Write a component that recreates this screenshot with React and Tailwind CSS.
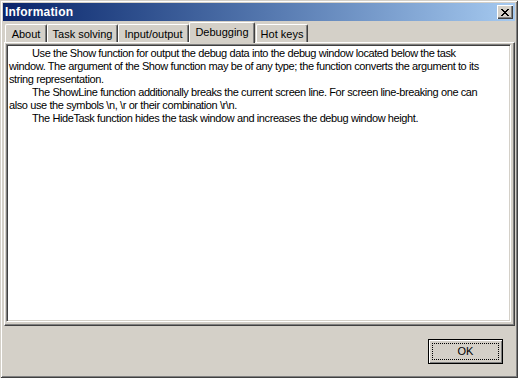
import React from "react";

const font = { fontFamily: '"Liberation Sans", Arial, sans-serif' };

function Tab({ label, w, selected, extra = "" }) {
  if (selected) {
    return (
      <div
        className={`relative z-10 -mb-[1px] h-[21px] ${w} ${extra} flex items-start justify-center pt-[2px] bg-[#d4d0c8] border-l border-t border-white border-r border-r-[#404040] shadow-[inset_-1px_0_0_#808080] rounded-t-[2px] text-[11px] leading-[14px] text-black`}
      >
        {label}
      </div>
    );
  }
  return (
    <div
      className={`h-[18px] ${w} ${extra} flex items-start justify-center pt-[2px] bg-[#d4d0c8] border-l border-t border-white border-r border-r-[#404040] shadow-[inset_-1px_0_0_#808080] rounded-t-[2px] text-[11px] leading-[14px] text-black`}
    >
      {label}
    </div>
  );
}

export default function App() {
  const lines = [
    { t: "Use the Show function for output the debug data into the debug window located below the task", indent: true },
    { t: "window. The argument of the Show function may be of any type; the function converts the argument to its" },
    { t: "string representation." },
    { t: "The ShowLine function additionally breaks the current screen line. For screen line-breaking one can", indent: true },
    { t: "also use the symbols \\n, \\r or their combination \\r\\n." },
    { t: "The HideTask function hides the task window and increases the debug window height.", indent: true },
  ];
  return (
    <div style={font} className="w-[518px] h-[378px] bg-[#d4d0c8] flex flex-col p-[3px] shadow-[inset_1px_1px_0_#d4d0c8,inset_-1px_-1px_0_#404040,inset_2px_2px_0_#ffffff,inset_-2px_-2px_0_#808080] overflow-hidden">
      {/* Title bar */}
      <div className="h-[18px] flex items-center justify-between pl-[2px] pr-[2px] bg-gradient-to-r from-[#0a246a] to-[#a6caf0]">
        <span className="text-white font-bold text-[12px] leading-[14px] tracking-[0.2px]">Information</span>
        <div className="w-[16px] h-[14px] bg-[#d4d0c8] flex items-center justify-center shadow-[inset_1px_1px_0_#ffffff,inset_-1px_-1px_0_#404040,inset_-2px_-2px_0_#808080]">
          <svg width="8" height="7" viewBox="0 0 8 7" shapeRendering="crispEdges">
            {[0, 1, 2, 3, 4, 5, 6].map((i) => (
              <g key={i}>
                <rect x={i} y={i} width="2" height="1" fill="#000" />
                <rect x={6 - i} y={i} width="2" height="1" fill="#000" />
              </g>
            ))}
          </svg>
        </div>
      </div>

      {/* Tab control */}
      <div className="ml-[1px] w-[511px] flex flex-col">
        <div className="h-[21px] flex items-end pl-[1px]">
          <Tab label="About" w="w-[42px]" />
          <Tab label="Task solving" w="w-[71px]" />
          <Tab label="Input/output" w="w-[71px]" />
          <Tab label="Debugging" w="w-[66px]" selected />
          <Tab label="Hot keys" w="w-[52px]" extra="ml-[1px]" />
        </div>
        <div className="h-[284px] border-l border-t border-white border-r border-b border-r-[#404040] border-b-[#404040] shadow-[inset_-1px_-1px_0_#808080] pl-[1px] pt-[1px] pr-[3px] pb-[3px]">
          <div className="w-full h-full bg-white border border-t-[#808080] border-l-[#808080] border-r-white border-b-white shadow-[inset_1px_1px_0_#404040,inset_-1px_-1px_0_#d4d0c8] pl-[2px] pt-[2px]">
            {lines.map((l, i) => (
              <div
                key={i}
                className={`whitespace-pre text-[11px] leading-[13px] tracking-[-0.4px] text-black ${l.indent ? "pl-[23px]" : ""}`}
              >
                {l.t}
              </div>
            ))}
          </div>
        </div>
      </div>

      {/* Button row */}
      <div className="flex justify-end mt-[13px] mr-[12px]">
        <div className="w-[75px] h-[25px] border border-black bg-[#d4d0c8] shadow-[inset_1px_1px_0_#ffffff,inset_-1px_-1px_0_#808080] p-[3px]">
          <div className="w-full h-full border border-dotted border-black flex items-center justify-center text-[11px] text-black">
            OK
          </div>
        </div>
      </div>
    </div>
  );
}
